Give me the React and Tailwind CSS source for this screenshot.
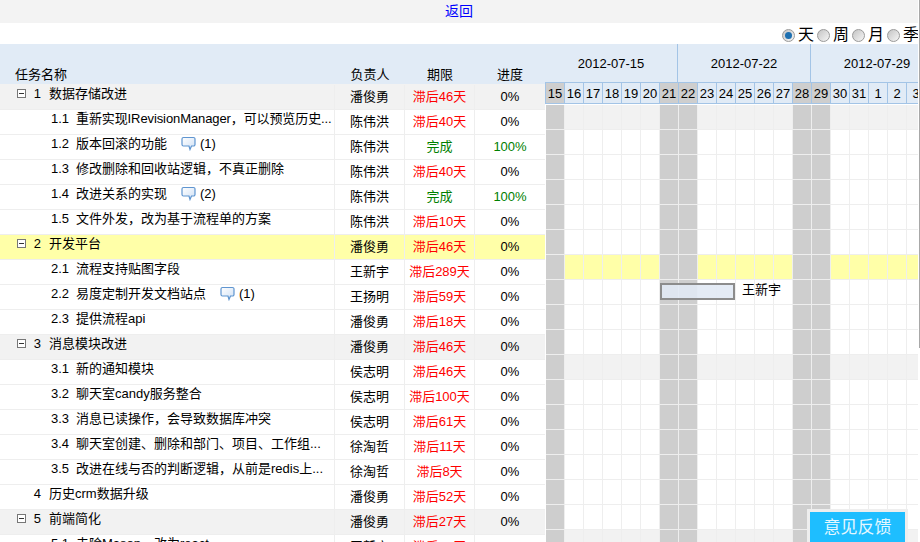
import React from "react";

const rows = [
  { num: "1", name: "数据存储改进", owner: "潘俊勇", due: "滞后46天", pct: "0%", type: "group" },
  { num: "1.1", name: "重新实现IRevisionManager，可以预览历史...", owner: "陈伟洪", due: "滞后40天", pct: "0%", tight: true },
  { num: "1.2", name: "版本回滚的功能", owner: "陈伟洪", due: "完成", pct: "100%", comments: 1 },
  { num: "1.3", name: "修改删除和回收站逻辑，不真正删除", owner: "陈伟洪", due: "滞后40天", pct: "0%" },
  { num: "1.4", name: "改进关系的实现", owner: "陈伟洪", due: "完成", pct: "100%", comments: 2 },
  { num: "1.5", name: "文件外发，改为基于流程单的方案", owner: "陈伟洪", due: "滞后10天", pct: "0%" },
  { num: "2", name: "开发平台", owner: "潘俊勇", due: "滞后46天", pct: "0%", type: "active" },
  { num: "2.1", name: "流程支持贴图字段", owner: "王新宇", due: "滞后289天", pct: "0%" },
  { num: "2.2", name: "易度定制开发文档站点", owner: "王扬明", due: "滞后59天", pct: "0%", comments: 1 },
  { num: "2.3", name: "提供流程api", owner: "潘俊勇", due: "滞后18天", pct: "0%" },
  { num: "3", name: "消息模块改进", owner: "潘俊勇", due: "滞后46天", pct: "0%", type: "group" },
  { num: "3.1", name: "新的通知模块", owner: "侯志明", due: "滞后46天", pct: "0%" },
  { num: "3.2", name: "聊天室candy服务整合", owner: "侯志明", due: "滞后100天", pct: "0%" },
  { num: "3.3", name: "消息已读操作，会导致数据库冲突", owner: "侯志明", due: "滞后61天", pct: "0%" },
  { num: "3.4", name: "聊天室创建、删除和部门、项目、工作组...", owner: "徐淘哲", due: "滞后11天", pct: "0%" },
  { num: "3.5", name: "改进在线与否的判断逻辑，从前是redis上...", owner: "徐淘哲", due: "滞后8天", pct: "0%" },
  { num: "4", name: "历史crm数据升级", owner: "潘俊勇", due: "滞后52天", pct: "0%", leaf: true },
  { num: "5", name: "前端简化", owner: "潘俊勇", due: "滞后27天", pct: "0%", type: "group" },
  { num: "5.1", name: "去除Mason，改为react", owner: "王新宇", due: "滞后27天", pct: "0%" },
];

const days = [15, 16, 17, 18, 19, 20, 21, 22, 23, 24, 25, 26, 27, 28, 29, 30, 31, 1, 2, 3];
const weekend = [0, 6, 7, 13, 14];

function MinusBox() {
  return (
    <span className="flex h-[9px] w-[9px] shrink-0 items-center justify-center border border-[#777] bg-white">
      <span className="h-px w-[5px] bg-[#333]" />
    </span>
  );
}

function CommentIcon() {
  return (
    <svg width="15" height="15" viewBox="0 0 15 15" className="shrink-0">
      <defs>
        <linearGradient id="bubble" x1="0" y1="0" x2="1" y2="1">
          <stop offset="0" stopColor="#ffffff" />
          <stop offset="1" stopColor="#cfe0f4" />
        </linearGradient>
      </defs>
      <path
        d="M2.5 1.5h10a1.5 1.5 0 0 1 1.5 1.5v5.5a1.5 1.5 0 0 1-1.5 1.5H10.5l-1.5 3.5-1-3.5H2.5A1.5 1.5 0 0 1 1 8.5V3a1.5 1.5 0 0 1 1.5-1.5z"
        fill="url(#bubble)"
        stroke="#5f95d0"
        strokeWidth="1.2"
      />
    </svg>
  );
}

function Radio({ label, checked }) {
  return (
    <div className="flex w-[35px] shrink-0 items-center">
      <span className="flex h-[13px] w-[13px] shrink-0 items-center justify-center rounded-full border border-[#9a9a9a] bg-linear-to-br from-[#c4c4c4] to-[#f6f6f6]">
        {checked ? <span className="h-[7px] w-[7px] rounded-full bg-[#1d6fb0]" /> : null}
      </span>
      <span className="ml-[3px] text-[16px] leading-none">{label}</span>
    </div>
  );
}

function TaskRow({ row }) {
  const isHead = row.type === "group" || row.leaf || row.type === "active";
  const bg = row.type === "group" ? "bg-[#f2f2f2]" : row.type === "active" ? "bg-[#ffffa8]" : "bg-white";
  const late = row.due !== "完成";
  return (
    <div className={`flex h-[25px] border-b border-[#eeeeee] ${bg}`}>
      <div className="flex w-[335px] items-center whitespace-nowrap border-r border-[#eeeeee] pb-[7px]">
        {isHead ? (
          <span className="flex w-[41px] shrink-0 items-center pl-[17px]">
            {row.leaf ? null : <MinusBox />}
            <span className="ml-auto">{row.num}</span>
          </span>
        ) : (
          <span className="ml-[51px] w-[25px] shrink-0">{row.num}</span>
        )}
        <span className={`${isHead ? "ml-[8px]" : ""} ${row.tight ? "tracking-[-0.1px]" : ""}`}>{row.name}</span>
        {row.comments ? (
          <span className="ml-[14px] flex items-center gap-[4px]">
            <CommentIcon />
            <span>({row.comments})</span>
          </span>
        ) : null}
      </div>
      <div className="flex w-[70px] items-center justify-center border-r border-[#eeeeee] pb-[2px]">{row.owner}</div>
      <div
        className={`flex w-[70px] items-center justify-center border-r border-[#eeeeee] pb-[2px] ${
          late ? "text-[#ff0000]" : "text-[#008000]"
        }`}
      >
        {row.due}
      </div>
      <div className={`flex w-[70px] items-center justify-center pb-[2px] ${row.pct === "100%" ? "text-[#008000]" : ""}`}>
        {row.pct}
      </div>
    </div>
  );
}

function GanttRow({ row, index }) {
  const bg = row.type === "group" ? "bg-[#f2f2f2]" : row.type === "active" ? "bg-[#ffffa8]" : "bg-white";
  return (
    <div className="relative flex h-[25px]">
      {days.map((d, i) => (
        <div
          key={i}
          className={`h-[25px] w-[19px] shrink-0 border-r border-b border-[#eeeeee] ${
            weekend.includes(i) ? "bg-[#cecece]" : bg
          }`}
        />
      ))}
      {index === 7 ? (
        <>
          <div className="absolute left-[114px] top-[3px] h-[17px] w-[75px] border-2 border-[#8c8c8c] bg-[#e1e9f4]/90" />
          <span className="absolute left-[196px] top-[1px] whitespace-nowrap">王新宇</span>
        </>
      ) : null}
    </div>
  );
}

export default function App() {
  return (
    <div className="relative h-[542px] w-[920px] overflow-hidden bg-white font-['Liberation_Sans','Noto_Sans_CJK_SC',sans-serif] text-[13px] leading-[17px] text-black">
      <div className="w-[918px]">
        {/* top link */}
        <div className="flex h-[23px] items-center justify-center bg-[#f3f3f3]">
          <a href="#" className="text-[14px] text-[#0000ff]">
            返回
          </a>
        </div>

        {/* scale switch */}
        <div className="flex h-[21px] items-center justify-end overflow-hidden pt-[3px]">
          <div className="mr-[-4px] flex">
            <Radio label="天" checked />
            <Radio label="周" />
            <Radio label="月" />
            <Radio label="季" />
          </div>
        </div>

        <div className="flex">
          {/* task table */}
          <div className="w-[545px] shrink-0">
            <div className="flex h-10 items-end bg-[#e1ebf6] pb-[1px]">
              <div className="w-[335px] pl-[15px]">任务名称</div>
              <div className="w-[70px] text-center">负责人</div>
              <div className="w-[70px] text-center">期限</div>
              <div className="w-[70px] text-center">进度</div>
            </div>
            <div className="border-t border-[#f2f2f2]">
              {rows.map((row) => (
                <TaskRow key={row.num} row={row} />
              ))}
            </div>
          </div>

          {/* gantt */}
          <div className="min-w-0 flex-1 overflow-hidden">
            <div className="flex h-[38px] bg-[#e1ebf6]">
              {["2012-07-15", "2012-07-22", "2012-07-29"].map((w) => (
                <div
                  key={w}
                  className="flex w-[133px] shrink-0 items-center justify-center border-r border-[#a3c4e6]"
                >
                  {w}
                </div>
              ))}
            </div>
            <div className="flex h-[22px] border-y border-l border-[#a3c4e6] bg-[#e1ebf6]">
              {days.map((d, i) => (
                <div
                  key={i}
                  className={`flex w-[19px] shrink-0 items-center justify-center border-r border-[#a3c4e6] ${
                    weekend.includes(i) ? "bg-[#cecece]" : ""
                  }`}
                >
                  {d}
                </div>
              ))}
            </div>
            <div className="mt-px pl-px">
              {rows.map((row, i) => (
                <GanttRow key={row.num} row={row} index={i} />
              ))}
            </div>
          </div>
        </div>
      </div>

      {/* page scrollbar sliver */}
      <div className="absolute right-0 top-0 h-[348px] w-px bg-[#a8a8a8]" />

      <div className="absolute left-[807px] top-[509px] flex h-[40px] w-[101px] justify-center border-[3px] border-[#eeeeee] bg-[#1ebeff] pt-[5px] text-[17px] leading-[22px] text-[#e4f7ff]">
        意见反馈
      </div>
    </div>
  );
}
